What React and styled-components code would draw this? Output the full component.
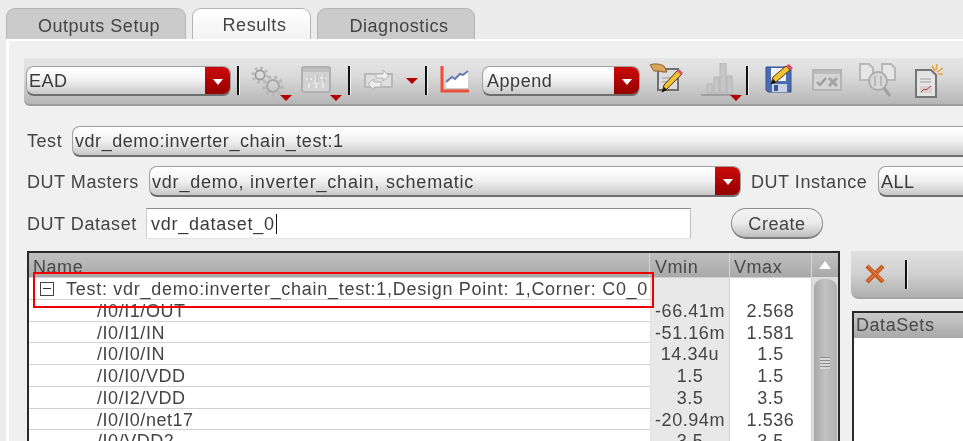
import React from 'react'
import styled, { createGlobalStyle } from 'styled-components'

const GlobalStyle = createGlobalStyle`
  html, body {
    margin: 0;
    height: 441px;
    overflow: hidden;
    background: #ececec;
  }
`

const Page = styled.div`
  width: 1010px;
  height: 441px;
  overflow: hidden;
  padding: 8px 0 0 6px;
  box-sizing: border-box;
  font-family: 'Liberation Sans', Arial, sans-serif;
  font-size: 18px;
  letter-spacing: 0.55px;
  color: #444;
  filter: blur(0.4px);
`

const TabBar = styled.div`
  display: flex;
  gap: 6px;
  height: 31px;
`

const Tab = styled.div`
  width: ${p => p.$width}px;
  box-sizing: border-box;
  display: flex;
  align-items: center;
  justify-content: center;
  padding: ${p => (p.$active ? 3 : 5)}px 0 0 6px;
  border: 1px solid #b4b4b4;
  border-bottom: 0;
  border-radius: 9px 9px 0 0;
  background: ${p => (p.$active ? 'linear-gradient(#ffffff, #f2f2f2)' : '#cbcbcb')};
`

const Panel = styled.div`
  border-top: 2px solid #fff;
  border-left: 3px solid #fff;
  background: #f0f0f0;
  height: 402px;
  padding: 17px 0 0 15px;
  box-sizing: border-box;
`

const Toolbar = styled.div`
  display: flex;
  align-items: flex-start;
  height: 48px;
  padding: 8px 0 0 2px;
  box-sizing: border-box;
  border-bottom: 2px solid #9c9c9c;
  border-radius: 0 0 0 6px;
  background: linear-gradient(#e6e6e6 0%, #dadada 40%, #b6b6b6 100%);
`

const Body = styled.div`
  padding-left: 3px;
`

const Combo = styled.div`
  width: ${p => p.$width}px;
  height: ${p => p.$height || 30}px;
  flex: ${p => (p.$width ? 'none' : 1)};
  margin-left: ${p => p.$left || 0}px;
  box-sizing: border-box;
  display: flex;
  border: 1px solid #a0a0a0;
  border-bottom: 2px solid #6e6e6e;
  border-radius: 8px;
  background: linear-gradient(#ffffff 10%, #f0f0f0 50%, #c8c8c8 100%);
  overflow: hidden;
`

const ComboText = styled.span`
  flex: 1;
  padding-left: ${p => p.$pad || 2}px;
  line-height: ${p => p.$line || 29}px;
  letter-spacing: ${p => p.$track || 0.55}px;
  color: #3a3a3a;
  white-space: nowrap;
`

const ComboArrow = styled.span`
  width: 25px;
  display: flex;
  align-items: center;
  justify-content: center;
  background: linear-gradient(#cc0a0a, #950000);
  &::after {
    content: '';
    margin-top: 2px;
    border-top: 6px solid #fff;
    border-left: 5px solid transparent;
    border-right: 5px solid transparent;
  }
`

const ToolSeparator = styled.span`
  flex: none;
  width: 2px;
  height: 29px;
  margin-left: ${p => p.$left}px;
  background: #111;
  box-shadow: 1px 0 0 #f2f2f2;
`

const MenuArrow = styled.span`
  flex: none;
  margin: ${p => p.$top}px 0 0 ${p => p.$left}px;
  border-top: 6px solid #b50000;
  border-left: 6px solid transparent;
  border-right: 6px solid transparent;
`

const Icon = styled.svg`
  flex: none;
  display: block;
  margin: ${p => p.$top || 0}px 0 0 ${p => p.$left}px;
`

const FormRow = styled.div`
  display: flex;
  align-items: center;
  height: 31px;
  margin-top: ${p => p.$top}px;
`

const FieldLabel = styled.label`
  flex: none;
  width: ${p => p.$width}px;
  padding-top: ${p => (p.$drop ? 2 : 0)}px;
  white-space: nowrap;
`

const InlineLabel = styled.label`
  flex: none;
  width: 127px;
  margin-left: 10px;
  padding-top: 2px;
  white-space: nowrap;
`

const TextInput = styled.div`
  width: 545px;
  height: 31px;
  box-sizing: border-box;
  padding-left: 4px;
  line-height: 31px;
  letter-spacing: 0.75px;
  color: #3a3a3a;
  background: #fff;
  border-top: 1px solid #8c8c8c;
  border-left: 1px solid #d0d0d0;
  border-right: 1px solid #c0c0c0;
  border-bottom: 1px solid #e4e4e4;
`

const Caret = styled.span`
  display: inline-block;
  width: 1px;
  height: 20px;
  margin-left: 1px;
  vertical-align: -4px;
  background: #111;
`

const PushButton = styled.button`
  width: 92px;
  height: 31px;
  margin-left: 40px;
  padding: 2px 0 0;
  font: inherit;
  letter-spacing: inherit;
  color: #444;
  border: 1px solid #8e8e8e;
  border-bottom: 2px solid #7c7c7c;
  border-radius: 15px;
  background: linear-gradient(#f4f4f4 0%, #ebebeb 50%, #bdbdbd 100%);
`

const Bottom = styled.div`
  display: flex;
  align-items: flex-start;
  margin-top: 12px;
`

const ResultsTable = styled.div`
  position: relative;
  flex: none;
  width: 813px;
  height: 200px;
  box-sizing: border-box;
  overflow: hidden;
  display: flex;
  border: 2px solid #2a2a2a;
  border-bottom: 0;
  background: #fff;
`

const Columns = styled.div`
  flex: none;
  width: 783px;
`

const Row = styled.div`
  display: grid;
  grid-template-columns: 621px 80px 82px;
  height: ${p => p.$height || 21.75}px;
  box-sizing: border-box;
  border-bottom: 1px solid #d2d0d0;
`

const HeaderCell = styled.div`
  padding-left: ${p => p.$pad}px;
  line-height: 29px;
  background: linear-gradient(#c0c0c0, #a9a9a9);
  border-right: 1px solid #d6d6d6;
  color: #484848;
  overflow: hidden;
`

const NameCell = styled.div`
  padding-left: ${p => p.$pad}px;
  line-height: 22px;
  white-space: nowrap;
`

const GroupCell = styled(NameCell)`
  letter-spacing: 0.72px;
`

const ValueCell = styled.div`
  line-height: 22px;
  text-align: center;
  background: ${p => (p.$shaded ? '#e8e8e8' : '#fff')};
  border-right: 1px solid #d2d0d0;
  border-left: ${p => (p.$shaded ? '1px solid #e0e0e0' : 0)};
`

const TreeToggle = styled.span`
  display: inline-block;
  position: relative;
  width: 12px;
  height: 12px;
  margin-right: 12px;
  vertical-align: -1px;
  border: 1px solid #444;
  &::after {
    content: '';
    position: absolute;
    left: 2px;
    right: 2px;
    top: 5px;
    height: 1px;
    background: #333;
  }
`

const Highlight = styled.div`
  position: absolute;
  left: 4px;
  top: 19px;
  width: 621px;
  height: 36px;
  box-sizing: border-box;
  border: 2px solid #f00000;
`

const Scrollbar = styled.div`
  flex: 1;
  display: flex;
  flex-direction: column;
  align-items: center;
  background: #dcdcdc;
`

const ScrollUp = styled.div`
  align-self: stretch;
  height: 24px;
  display: flex;
  align-items: center;
  justify-content: center;
  background: linear-gradient(#c4c4c4, #a8a8a8);
  &::after {
    content: '';
    border-bottom: 8px solid #fff;
    border-left: 6px solid transparent;
    border-right: 6px solid transparent;
  }
`

const ScrollThumb = styled.div`
  width: 23px;
  flex: 1;
  margin-top: 2px;
  padding-top: 78px;
  box-sizing: border-box;
  border-radius: 9px 9px 0 0;
  background: linear-gradient(90deg, #a8a8a8, #c2c2c2 50%, #b0b0b0);
`

const ThumbGrip = styled.div`
  width: 10px;
  height: 12px;
  margin: 0 auto;
  background: repeating-linear-gradient(#8e8e8e 0 1px, #d8d8d8 1px 3px);
`

const SidePanel = styled.div`
  flex: 1;
  margin-left: 11px;
`

const SideToolbar = styled.div`
  height: 48px;
  display: flex;
  align-items: center;
  box-sizing: border-box;
  border-bottom: 2px solid #a4a4a4;
  border-radius: 0 0 0 8px;
  background: linear-gradient(#e0e0e0, #d0d0d0 50%, #b0b0b0);
`

const DataSets = styled.div`
  margin: 12px 0 0 1px;
  height: 132px;
  box-sizing: border-box;
  border-top: 2px solid #2a2a2a;
  border-left: 2px solid #2a2a2a;
  background: #fff;
`

const DataSetsHeader = styled.div`
  height: 25px;
  padding-left: 2px;
  line-height: 24px;
  color: #484848;
  background: linear-gradient(#cacaca, #a8a8a8);
`

// the small red menu triangle that sits in the corner of some tool icons
const CornerArrow = ({ x, y }) => <path d={`M${x} ${y}h12l-6 6z`} fill="#b50000" />

const GearIcon = () => (
  <Icon width="41" height="36" viewBox="0 0 41 36" $left={12}>
    <g fill="none" stroke="#b8b8b8">
      <circle cx="9" cy="9" r="7" strokeWidth="3" strokeDasharray="2.6 2.9" />
      <circle cx="9" cy="9" r="4.6" strokeWidth="1.6" stroke="#989898" />
      <circle cx="22" cy="20" r="9" strokeWidth="3.4" strokeDasharray="3 3.2" />
      <circle cx="22" cy="20" r="6" strokeWidth="2" stroke="#a8a8a8" />
    </g>
    <CornerArrow x={29} y={29} />
  </Icon>
)

const WindowIcon = () => (
  <Icon width="41" height="36" viewBox="0 0 41 36" $left={9}>
    <rect x="1" y="1" width="28" height="25" rx="2" fill="#d2d2d2" stroke="#b0b0b0" strokeWidth="2" />
    <rect x="2" y="2" width="26" height="4" fill="#bebebe" />
    <path d="M8 9v13M15 9v13M22 9v13M5 13h6M12 17h6M19 12h6" stroke="#e8e8e8" strokeWidth="2" />
    <path d="M8 9v8M16 9v8M23 9v8" stroke="#b0b0b0" />
    <CornerArrow x={29} y={29} />
  </Icon>
)

const LoopIcon = () => (
  <Icon width="29" height="20" viewBox="0 0 29 20" $top={4} $left={14}>
    <rect x="1" y="4" width="27" height="13" fill="#dedede" stroke="#b8b8b8" strokeWidth="2" />
    <path d="M12 4h7V0l6 6-6 5V8h-7zM17 17h-7v3l-6-6 6-5v3h7z" fill="#efefef" stroke="#b4b4b4" />
  </Icon>
)

const TrendIcon = () => (
  <Icon width="29" height="27" viewBox="0 0 29 27" $left={13}>
    <path d="M2 0v25h27" fill="none" stroke="#ec4f38" strokeWidth="3" />
    <path d="M6 22V16l6-5 3 2 5-5 3 1 5-4v17z" fill="#fff" />
    <path d="M6 16l6-5 3 2 5-5 3 1 5-4" fill="none" stroke="#6478b4" strokeWidth="2" />
  </Icon>
)

const NoteEditIcon = () => (
  <Icon width="34" height="31" viewBox="0 0 34 31" $top={-3} $left={9}>
    <rect x="9" y="6" width="20" height="21" fill="#dcdcdc" stroke="#707070" strokeWidth="2" />
    <path d="M13 15h10M13 19h7" stroke="#999" />
    <path d="M1 2c5-2 10-1 14 1l3 6-4 0-4-1H5z" fill="#d9a45c" stroke="#8a6128" />
    <path d="M13 29l2-7L29 7l4 4-15 15z" fill="#f2c230" stroke="#4c3414" />
    <path d="M13 29l2-5 3 3z" fill="#111" />
    <path d="M28 8l2-2 4 4-2 2z" fill="#d8506a" />
  </Icon>
)

const BarsIcon = () => (
  <Icon width="42" height="38" viewBox="0 0 42 38" $top={-3} $left={18}>
    <path d="M6 30V21h5v9zM13 30V14h5v16zM19 30V0h6v30zM26 30V13h5v17z" fill="#c6c6c6" stroke="#b4b4b4" />
    <path d="M0 32h36" stroke="#a0a0a0" strokeWidth="2" />
    <CornerArrow x={29} y={32} />
  </Icon>
)

const SaveEditIcon = () => (
  <Icon width="29" height="31" viewBox="0 0 29 31" $top={-3} $left={17}>
    <path d="M1 4h25v25H3l-2-2z" fill="#4a6cb0" stroke="#36508c" />
    <rect x="6" y="5" width="15" height="13" fill="#f4f4f4" />
    <rect x="7" y="21" width="15" height="8" fill="#c9d2e4" />
    <rect x="9" y="22" width="4" height="6" fill="#3b5590" />
    <path d="M6 21l2-7L21 3l4 4L11 19z" fill="#f2c230" stroke="#4c3414" />
    <path d="M6 21l2-5 3 3z" fill="#111" />
    <path d="M21 3l3-2 4 4-3 2z" fill="#d8506a" />
  </Icon>
)

const CheckCrossIcon = () => (
  <Icon width="30" height="22" viewBox="0 0 30 22" $top={3} $left={18}>
    <rect x="1" y="1" width="28" height="20" fill="#d4d4d4" stroke="#b4b4b4" strokeWidth="2" />
    <rect x="2" y="2" width="26" height="3" fill="#bcbcbc" />
    <path d="M5 13l3 3 6-7" fill="none" stroke="#989898" strokeWidth="2" />
    <path d="M17 9l8 8M25 9l-8 8" stroke="#a4a4a4" strokeWidth="3" />
  </Icon>
)

const FindIcon = () => (
  <Icon width="37" height="36" viewBox="0 0 37 36" $top={-3} $left={17}>
    <path d="M1 1h9l4 4v12H1zM23 1h9l4 4v12H23z" fill="#e6e6e6" stroke="#b8b8b8" strokeWidth="2" />
    <circle cx="19" cy="18" r="9" fill="#d8d8d8" stroke="#acacac" strokeWidth="2" />
    <path d="M16 13v10M22 13v10" stroke="#b8b8b8" strokeWidth="2" />
    <path d="M25 25l6 8" stroke="#a0a0a0" strokeWidth="3" />
  </Icon>
)

const ReportIcon = () => (
  <Icon width="28" height="34" viewBox="0 0 28 34" $top={-2} $left={19}>
    <path d="M1 6h15l5 5v22H1z" fill="#e4e4e4" stroke="#757575" strokeWidth="2" />
    <path d="M5 15h11M5 18h11" stroke="#a0a0a0" />
    <rect x="5" y="22" width="12" height="7" fill="#d8d0d0" />
    <path d="M6 28l3-3 2 1 5-4" fill="none" stroke="#c43a3a" />
    <path d="M20 7l-3-5M21 6l1-6M22 8l6-4M23 10l5 0" stroke="#e8a030" strokeWidth="1.5" />
  </Icon>
)

const CrossIcon = () => (
  <Icon width="22" height="22" viewBox="0 0 22 22" $left={13}>
    <path d="M3 3l16 16M19 3L3 19" stroke="#c95a20" strokeWidth="4.5" />
    <path d="M4 3l15 15M18 4L4 18" stroke="#e88a50" strokeWidth="1" />
  </Icon>
)

const results = [
  { name: '/I0/I1/OUT', vmin: '-66.41m', vmax: '2.568' },
  { name: '/I0/I1/IN', vmin: '-51.16m', vmax: '1.581' },
  { name: '/I0/I0/IN', vmin: '14.34u', vmax: '1.5' },
  { name: '/I0/I0/VDD', vmin: '1.5', vmax: '1.5' },
  { name: '/I0/I2/VDD', vmin: '3.5', vmax: '3.5' },
  { name: '/I0/I0/net17', vmin: '-20.94m', vmax: '1.536' },
  { name: '/I0/VDD2', vmin: '3.5', vmax: '3.5' },
]

export default function App() {
  return (
    <Page>
      <GlobalStyle />
      <TabBar>
        <Tab $width={180}>Outputs Setup</Tab>
        <Tab $width={119} $active>Results</Tab>
        <Tab $width={158}>Diagnostics</Tab>
      </TabBar>
      <Panel>
        <Toolbar>
          <Combo $width={205}>
            <ComboText>EAD</ComboText>
            <ComboArrow />
          </Combo>
          <ToolSeparator $left={6} />
          <GearIcon />
          <WindowIcon />
          <ToolSeparator $left={6} />
          <LoopIcon />
          <MenuArrow $top={12} $left={13} />
          <ToolSeparator $left={7} />
          <TrendIcon />
          <Combo $width={158} $left={13}>
            <ComboText $pad={4}>Append</ComboText>
            <ComboArrow />
          </Combo>
          <NoteEditIcon />
          <BarsIcon />
          <ToolSeparator $left={3} />
          <SaveEditIcon />
          <CheckCrossIcon />
          <FindIcon />
          <ReportIcon />
        </Toolbar>

        <Body>
          <FormRow $top={20}>
            <FieldLabel $width={45}>Test</FieldLabel>
            <Combo $height={31}>
              <ComboText>vdr_demo:inverter_chain_test:1</ComboText>
            </Combo>
          </FormRow>
          <FormRow $top={9}>
            <FieldLabel $width={122} $drop>DUT Masters</FieldLabel>
            <Combo $width={592} $height={31}>
              <ComboText $track={0.8} $line={31}>vdr_demo, inverter_chain, schematic</ComboText>
              <ComboArrow />
            </Combo>
            <InlineLabel>DUT Instance</InlineLabel>
            <Combo $height={31}>
              <ComboText $line={31}>ALL</ComboText>
            </Combo>
          </FormRow>
          <FormRow $top={11}>
            <FieldLabel $width={119} $drop>DUT Dataset</FieldLabel>
            <TextInput>vdr_dataset_0<Caret /></TextInput>
            <PushButton>Create</PushButton>
          </FormRow>

          <Bottom>
            <ResultsTable>
              <Columns>
                <Row $height={25}>
                  <HeaderCell $pad={4}>Name</HeaderCell>
                  <HeaderCell $pad={5}>Vmin</HeaderCell>
                  <HeaderCell $pad={4}>Vmax</HeaderCell>
                </Row>
                <Row>
                  <GroupCell $pad={11}><TreeToggle />Test: vdr_demo:inverter_chain_test:1,Design Point: 1,Corner: C0_0</GroupCell>
                  <ValueCell $shaded />
                  <ValueCell />
                </Row>
                {results.map(r => (
                  <Row key={r.name}>
                    <NameCell $pad={68}>{r.name}</NameCell>
                    <ValueCell $shaded>{r.vmin}</ValueCell>
                    <ValueCell>{r.vmax}</ValueCell>
                  </Row>
                ))}
              </Columns>
              <Scrollbar>
                <ScrollUp />
                <ScrollThumb>
                  <ThumbGrip />
                </ScrollThumb>
              </Scrollbar>
              <Highlight />
            </ResultsTable>
            <SidePanel>
              <SideToolbar>
                <CrossIcon />
                <ToolSeparator $left={19} />
              </SideToolbar>
              <DataSets>
                <DataSetsHeader>DataSets</DataSetsHeader>
              </DataSets>
            </SidePanel>
          </Bottom>
        </Body>
      </Panel>
    </Page>
  )
}
